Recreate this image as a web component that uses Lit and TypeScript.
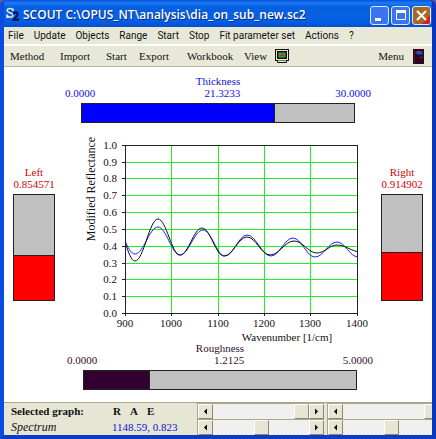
import { LitElement, css, html, svg } from "lit";
import { customElement, property } from "lit/decorators.js";

type Point = [number, number];

/** Joins successive crests and troughs with half-cosine shaped curves. */
function wavePath(points: Point[]): string {
  let d = `M${points[0][0]} ${points[0][1]}`;
  for (let i = 1; i < points.length; i++) {
    const [x0, y0] = points[i - 1];
    const [x1, y1] = points[i];
    const dx = (x1 - x0) * 0.38;
    d += `C${x0 + dx} ${y0} ${x1 - dx} ${y1} ${x1} ${y1}`;
  }
  return d;
}

/** Horizontal parameter gauge with its range above the bar. */
@customElement("range-gauge")
class RangeGauge extends LitElement {
  @property() label = "";
  @property({ type: Number }) value = 0;
  @property({ type: Number }) max = 1;

  static styles = css`
    :host {
      display: block;
      font: 11px/12px "Liberation Serif", serif;
      color: var(--ink);
    }
    .scale {
      display: grid;
      grid-template-columns: 1fr auto 1fr;
      margin-bottom: 4px;
    }
    .name {
      grid-column: 2;
      grid-row: 1;
      text-align: center;
    }
    .low {
      grid-column: 1;
      grid-row: 2;
    }
    .now {
      grid-column: 2;
      grid-row: 2;
      text-align: right;
    }
    .high {
      grid-column: 3;
      grid-row: 2;
      text-align: right;
    }
    .bar {
      box-sizing: border-box;
      height: 20px;
      margin: 0 16px;
      border: 1px solid #222;
      background: #c0c0c0;
    }
    .fill {
      box-sizing: border-box;
      height: 100%;
      background: var(--fill);
      border-right: 1px solid #222;
    }
  `;

  render() {
    return html`
      <div class="scale">
        <span class="name">${this.label}</span>
        <span class="low">0.0000</span>
        <span class="now">${this.value.toFixed(4)}</span>
        <span class="high">${this.max.toFixed(4)}</span>
      </div>
      <div class="bar">
        <div class="fill" style="width:${(this.value / this.max) * 100}%"></div>
      </div>
    `;
  }
}

/** Vertical level gauge shown beside the plot. */
@customElement("level-gauge")
class LevelGauge extends LitElement {
  @property() label = "";
  @property({ type: Number }) value = 0;
  @property({ type: Number }) max = 2;

  static styles = css`
    :host {
      display: block;
      width: 42px;
      font: 11px/12px "Liberation Serif", serif;
      color: #d00000;
      text-align: center;
    }
    .bar {
      box-sizing: border-box;
      display: flex;
      flex-direction: column;
      justify-content: flex-end;
      height: 107px;
      margin-top: 4px;
      border: 1px solid #222;
      background: #c0c0c0;
    }
    .fill {
      box-sizing: border-box;
      background: #ff0000;
      border-top: 1px solid #222;
    }
  `;

  render() {
    return html`
      <div>${this.label}</div>
      <div>${this.value.toFixed(6)}</div>
      <div class="bar">
        <div class="fill" style="height:${(this.value / this.max) * 100}%"></div>
      </div>
    `;
  }
}

/** Reflectance against wavenumber, measured and simulated. */
@customElement("spectrum-plot")
class SpectrumPlot extends LitElement {
  static styles = css`
    :host {
      display: block;
    }
    svg {
      display: block;
      width: 100%;
      overflow: visible;
    }
    text {
      font: 11px "Liberation Serif", serif;
      fill: #111;
    }
    .tick-y {
      text-anchor: end;
    }
    .tick-x,
    .title-x,
    .title-y {
      text-anchor: middle;
    }
    .title-y {
      font-size: 12px;
    }
    .grid {
      stroke: #22f022;
      shape-rendering: crispEdges;
    }
    .axis {
      fill: none;
      stroke: #222;
      shape-rendering: crispEdges;
    }
    .curve {
      fill: none;
      stroke-width: 1;
    }
    .simulated {
      stroke: #2020ff;
    }
    .measured {
      stroke: #111;
    }
  `;

  private xs = [125, 171, 218, 264, 310, 357];
  private ys = [313, 296, 279, 263, 246, 229, 212, 195, 178, 162, 145];

  private measured: Point[] = [
    [116, 226], [135, 261], [158, 219], [180, 255], [202, 228], [224, 256],
    [247, 237], [270, 255], [294, 241], [317, 253], [337, 245], [361, 252],
  ];
  private simulated: Point[] = [
    [114, 226], [135, 254], [158, 227], [180, 255], [203, 230], [225, 256],
    [247, 235], [271, 256], [293, 238], [315, 257], [337, 242], [358, 257],
  ];

  render() {
    return html`
      <svg viewBox="62 134 312 208" role="img" aria-label="Modified Reflectance over Wavenumber">
        <clipPath id="area"><rect x="125" y="145" width="232" height="168" /></clipPath>
        ${this.xs.slice(1, -1).map((x) => svg`<line class="grid" x1=${x + 0.5} x2=${x + 0.5} y1="145" y2="313" />`)}
        ${this.ys.slice(1, -1).map((y) => svg`<line class="grid" x1="125" x2="357" y1=${y + 0.5} y2=${y + 0.5} />`)}
        <g clip-path="url(#area)">
          <path class="curve simulated" d=${wavePath(this.simulated)} />
          <path class="curve measured" d=${wavePath(this.measured)} />
        </g>
        <rect class="axis" x="125.5" y="145.5" width="232" height="168" />
        ${this.xs.map((x, i) => svg`
          <line class="axis" x1=${x + 0.5} x2=${x + 0.5} y1="313" y2="316" />
          <text class="tick-x" x=${x} y="327">${900 + i * 100}</text>`)}
        ${this.ys.map((y, i) => svg`
          <line class="axis" x1="122" x2="125" y1=${y + 0.5} y2=${y + 0.5} />
          <text class="tick-y" x="117" y=${y + 4}>${(i / 10).toFixed(1)}</text>`)}
        <text class="title-x" x="287" y="341">Wavenumber [1/cm]</text>
        <text class="title-y" transform="translate(95 189) rotate(-90)">Modified Reflectance</text>
      </svg>
    `;
  }
}

/** Scroll bar made of two arrow buttons around a slider. */
@customElement("scroll-bar")
class ScrollBar extends LitElement {
  @property() label = "";
  @property({ type: Number }) position = 0;

  static styles = css`
    :host {
      display: flex;
      flex: none;
      box-sizing: border-box;
      width: 127px;
      height: 16px;
      border-top: 1px solid #aca58a;
      border-left: 1px solid #aca58a;
    }
    button {
      flex: none;
      display: grid;
      place-items: center;
      width: 15px;
      height: 15px;
      padding: 0;
      box-sizing: border-box;
      background: #e6e6d4;
      border: 1px solid;
      border-color: #fff #8c8872 #8c8872 #fff;
    }
    svg {
      display: block;
    }
    input {
      appearance: none;
      flex: 1;
      min-width: 0;
      height: 15px;
      margin: 0;
      background: repeating-conic-gradient(#f4f4f2 0 25%, #ececea 0 50%) 0 0 / 4px 4px;
    }
    input::-webkit-slider-thumb {
      appearance: none;
      box-sizing: border-box;
      width: 15px;
      height: 15px;
      background: #e6e6d4;
      border: 1px solid;
      border-color: #fff #8c8872 #8c8872 #fff;
    }
  `;

  render() {
    return html`
      <button aria-label="Decrease ${this.label}">
        <svg width="5" height="7" viewBox="0 0 5 7"><path d="M4 0.5V6.5L1 3.5Z" /></svg>
      </button>
      <input type="range" min="0" max="100" .value=${String(this.position)} aria-label=${this.label} />
      <button aria-label="Increase ${this.label}">
        <svg width="5" height="7" viewBox="0 0 5 7"><path d="M1 0.5V6.5L4 3.5Z" /></svg>
      </button>
    `;
  }
}

@customElement("app-root")
class AppRoot extends LitElement {
  static styles = css`
    :host {
      display: flex;
      flex-direction: column;
      min-height: 100vh;
      background: #5a5aa8;
    }
    .window {
      flex: 1;
      display: flex;
      flex-direction: column;
      border: solid #0a4be0;
      border-width: 0 4px 4px;
      border-color: #0a4be0 #0a36c0 #0a3cc8 #0a4be0;
      border-radius: 6px 6px 0 0;
      overflow: hidden;
    }
    button {
      padding: 0;
      border: 0;
      background: none;
      font: inherit;
      color: inherit;
      text-align: left;
      white-space: nowrap;
    }
    .titlebar {
      display: flex;
      align-items: center;
      height: 27px;
      box-sizing: border-box;
      margin: 0 -4px;
      padding: 3px 5px 0 6px;
      gap: 4px;
      border-radius: 6px 6px 0 0;
      background: linear-gradient(#0a50d0, #1a7af8 3px, #0560e0 7px, #0560e4 20px, #0450d0);
    }
    .titlebar h1 {
      flex: 1;
      margin: 0;
      font: 600 12px/20px "Open Sans", sans-serif;
      color: #fff;
      text-shadow: 1px 1px #0a2a80;
      white-space: nowrap;
    }
    .caption {
      display: flex;
      gap: 2px;
    }
    .caption button,
    .caption svg,
    .logo,
    .display {
      display: block;
    }
    .menubar {
      display: flex;
      align-items: center;
      gap: 10px;
      height: 17px;
      padding: 0 4px;
      background: #e8e8d8;
      border-bottom: 1px solid #fff;
      font: 10px/16px Roboto, sans-serif;
      color: #111;
    }
    .toolbar {
      display: flex;
      align-items: center;
      height: 20px;
      padding: 0 8px 0 6px;
      background: #e8e8d8;
      border-top: 1px solid #fff;
      border-bottom: 1px solid #b8b8a4;
      font: 11px/16px "Liberation Serif", serif;
      color: #111;
    }
    .tools {
      display: grid;
      grid-template-columns: 50px 46px 33px 48px 57px 31px auto;
      align-items: center;
      flex: 1;
    }
    .door {
      display: flex;
      align-items: center;
      gap: 9px;
    }
    .canvas {
      flex: 1;
      padding: 8px 0 12px;
      background: #fff;
    }
    .thickness {
      margin: 0 61px 11px;
      --ink: #1010e0;
      --fill: #0000ff;
    }
    .roughness {
      margin: 0 59px 0 63px;
      --ink: #301030;
      --fill: #300030;
    }
    .middle {
      display: flex;
      gap: 7px;
      padding: 0 9px;
    }
    .middle level-gauge {
      flex: none;
      margin-top: 32px;
    }
    .middle spectrum-plot {
      flex: 1;
    }
    .status {
      display: flex;
      border-top: 1px solid #aca58a;
      background: #e6e6d4;
      font: 11px/16px "Liberation Serif", serif;
      overflow: hidden;
    }
    .info {
      flex: none;
      display: grid;
      grid-template-columns: 101px 1fr;
      grid-template-rows: 16px 16px;
      box-sizing: border-box;
      width: 193px;
      padding-left: 7px;
      color: #111;
    }
    .strong {
      font-weight: bold;
    }
    .graph {
      font-style: italic;
      font-size: 12px;
    }
    .cursor {
      color: #1010e0;
    }
    .modes {
      display: flex;
      gap: 9px;
      padding-left: 1px;
      font-weight: bold;
    }
    .scrolls {
      display: grid;
      grid-template-columns: 127px 127px;
      gap: 0 3px;
      flex: 1;
      min-width: 0;
    }
  `;

  private menus = ["File", "Update", "Objects", "Range", "Start", "Stop", "Fit parameter set", "Actions", "?"];
  private tools = ["Method", "Import", "Start", "Export", "Workbook", "View"];

  private captionButton(name: string, fill: string, glyph: unknown) {
    return html`
      <button aria-label=${name}>
        <svg width="19" height="19" viewBox="0 0 19 19">
          <rect x="0.5" y="0.5" width="18" height="18" rx="2.5" fill=${fill} stroke="#dfe8ff" />
          ${glyph}
        </svg>
      </button>
    `;
  }

  render() {
    return html`
      <div class="window">
        <header class="titlebar">
          <svg class="logo" width="13" height="16" viewBox="0 0 13 16" aria-hidden="true">
            <path d="M7 4V1.500M7 3Q6 1.500 4 1.500Q1.200 1.500 1.200 3.600Q1.500 5.200 4 5.700Q7 6.400 7 8Q6.800 10.200 4 10.200Q2 10.200 1 8.500M1 7.500V11"
              fill="none" stroke="#f4ecd8" stroke-width="1.500" />
            <path d="M7.500 7.500Q7.800 5.200 9.800 5.200Q11.800 5.400 11.600 7.400Q11.300 9.400 7.500 12.800H12.500V11"
              fill="none" stroke="#04103c" stroke-width="1.800" />
          </svg>
          <h1>SCOUT C:\\OPUS_NT\\analysis\\dia_on_sub_new.sc2</h1>
          <div class="caption">
            ${this.captionButton("Minimize", "#3a74f0", svg`<path d="M5 13.500H11" stroke="#fff" stroke-width="3" />`)}
            ${this.captionButton("Maximize", "#3a74f0", svg`<path d="M5.500 5V13.500H14.500V5" fill="none" stroke="#fff" /><path d="M5 5.500H15" stroke="#fff" stroke-width="3" />`)}
            ${this.captionButton("Close", "#a8682a", svg`<path d="M10 18H16Q18 18 18 16V9Z" fill="#d82010" /><path d="M5 5L14 14M14 5L5 14" stroke="#fff" stroke-width="2" />`)}
          </div>
        </header>
        <nav class="menubar">${this.menus.map((m) => html`<button>${m}</button>`)}</nav>
        <div class="toolbar">
          <div class="tools">
            ${this.tools.map((t) => html`<button>${t}</button>`)}
            <button aria-label="Display">
              <svg class="display" width="14" height="15" viewBox="0 0 14 15">
                <rect x="0.500" y="0.500" width="13" height="11" fill="#e8e8d8" stroke="#111" />
                <rect x="2.750" y="2.750" width="8.500" height="6.500" fill="#10c848" stroke="#111" stroke-width="1.500" />
                <path d="M4.500 7.500V5.500L5.500 4.500H8.500L9.500 5.500V7.500H8.500L7 7L5.500 7.500Z" fill="#e01818" />
                <path d="M5 5.500H6M8 5.500H9" stroke="#10c848" />
                <path d="M2.500 11.500V13.500H11.500V11.500" fill="#e8e8d8" stroke="#111" />
              </svg>
            </button>
          </div>
          <button class="door">
            Menu
            <svg width="11" height="15" viewBox="0 0 11 15" aria-hidden="true">
              <rect width="11" height="15" fill="#2a0820" />
              <path d="M2 4L4 2.500H9.500V5.500H5Z" fill="#1848e8" />
              <path d="M4 2.500H8" stroke="#e02020" />
              <path d="M7 8.500H9" stroke="#c02020" />
              <path d="M1.500 2V14" stroke="#501020" />
            </svg>
          </button>
        </div>
        <main class="canvas">
          <range-gauge class="thickness" label="Thickness" value="21.3233" max="30"></range-gauge>
          <div class="middle">
            <level-gauge label="Left" value="0.854571"></level-gauge>
            <spectrum-plot></spectrum-plot>
            <level-gauge label="Right" value="0.914902"></level-gauge>
          </div>
          <range-gauge class="roughness" label="Roughness" value="1.2125" max="5"></range-gauge>
        </main>
        <footer class="status">
          <div class="info">
            <span class="strong">Selected graph:</span>
            <span class="modes"><button>R</button><button>A</button><button>E</button></span>
            <span class="graph">Spectrum</span>
            <span class="cursor">1148.59, 0.823</span>
          </div>
          <div class="scrolls">
            <scroll-bar label="X minimum" position="100"></scroll-bar>
            <scroll-bar label="Y minimum" position="100"></scroll-bar>
            <scroll-bar label="X maximum" position="50"></scroll-bar>
            <scroll-bar label="Y maximum" position="50"></scroll-bar>
          </div>
        </footer>
      </div>
    `;
  }
}
